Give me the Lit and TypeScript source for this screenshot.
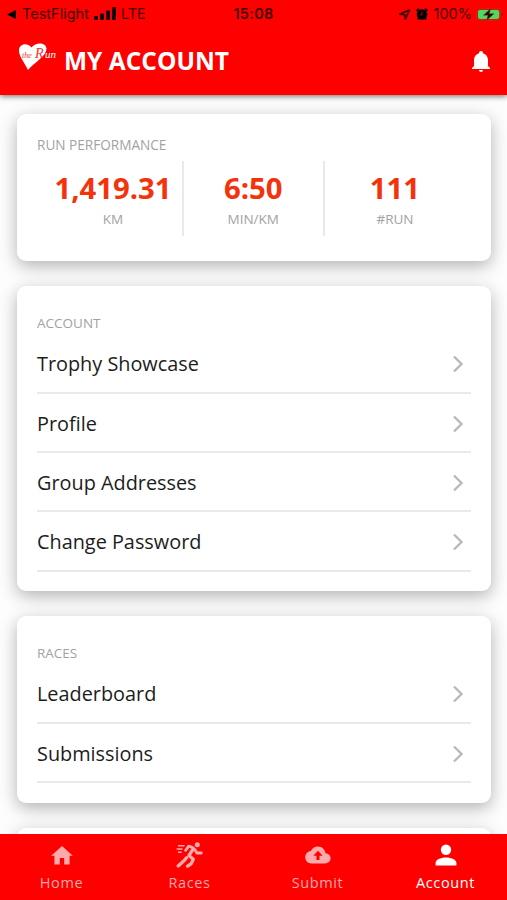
import { LitElement, html, svg, css } from "lit";
import { customElement, property } from "lit/decorators.js";

const icons: Record<string, unknown> = {
  home: svg`<path d="M10,20V14H14V20H19V12H22L12,3L2,12H5V20Z"/>`,
  races: svg`<circle cx="21.3" cy="2.700" r="2.500"/>
    <path d="M9.600 8.300 12.700 4.200 16.300 5.300 19.200 8 20.800 11H25.400" fill="none" stroke="currentColor" stroke-width="2.800" stroke-linecap="round" stroke-linejoin="round"/>
    <path d="M17.200 7 13 13.400 17.300 17.200 15.300 21.600 11.600 24.200M10.500 15.800 8.200 18.500 2.200 24" fill="none" stroke="currentColor" stroke-width="3.300" stroke-linecap="round" stroke-linejoin="round"/>
    <path d="M2 3.700H8.500M.7 7H6.500M2 10.300H5.600" fill="none" stroke="currentColor" stroke-width="1.600"/>`,
  submit: svg`<path fill-rule="evenodd" d="M20.500 8.200C19.900 4.200 17 1.400 13 1.400c-3.300 0-6 1.800-7.200 4.600C2.600 6.500.2 9.100.2 12.200c0 3.500 2.700 6.200 6.300 6.200h13.300c3.200 0 5.800-2.200 5.800-5.200 0-2.700-2.200-4.800-5.100-5ZM14.500 10.700v4.300h-3V10.700H8.300L13 5.800l4.700 4.900Z"/>`,
  account: svg`<path d="M12,4A4,4 0 0,1 16,8A4,4 0 0,1 12,12A4,4 0 0,1 8,8A4,4 0 0,1 12,4M12,14C16.420,14 20,15.790 20,18V20H4V18C4,15.790 7.580,14 12,14Z"/>`,
};

@customElement("menu-card")
export class MenuCard extends LitElement {
  @property() heading = "";
  @property({ attribute: false }) items: string[] = [];
  static styles = css`
    :host { display: block; background: #fff; border-radius: 9px; padding: 27px 20px 19.5px;
      box-shadow: 0 5px 17px rgba(0,0,0,.3); }
    .heading { font-size: 13.5px; line-height: 20px; color: #a2a2a2; }
    .row { display: flex; align-items: center; justify-content: space-between; box-sizing: border-box;
      height: 59.2px; padding-top: 2px; border-bottom: 2px solid #e9e9e9; font-size: 19.85px; color: #1c1c1c; }
    .heading + .row { height: 61px; }
    .chevron { width: 12px; height: 18px; margin-right: 6.5px; fill: none; stroke: #b9b9b9; stroke-width: 2.4; }
  `;
  render() {
    return html`<div class="heading">${this.heading}</div>
      ${this.items.map((t) => html`<div class="row"><span>${t}</span>
        <svg class="chevron" viewBox="0 0 12 18"><path d="M2 1.500 9.500 9 2 16.500"/></svg></div>`)}`;
  }
}

@customElement("app-root")
export class AppRoot extends LitElement {
  static styles = css`
    :host { display: flex; flex-direction: column; height: 900px; overflow: hidden; background: #fdfdfd;
      font-family: "Open Sans", "Noto Sans", sans-serif; }
    .top { flex: none; height: 95px; background: #f00; z-index: 1; box-shadow: 0 1px 6px rgba(0,0,0,.6); }
    .status { display: grid; grid-template-columns: 1fr auto 1fr; align-items: center; height: 28px;
      font: 14.5px/18px Inter, sans-serif; color: #400000; }
    .left, .right { display: flex; align-items: center; }
    .left { padding-left: 7px; }
    .right { justify-content: flex-end; padding-right: 3px; }
    .back { width: 9px; height: 9px; margin-right: 6px; }
    .signal { width: 22px; height: 13px; margin: -2px 5px 0; fill: #180000; }
    .clock { font-weight: 600; letter-spacing: .3px; }
    .arrow { width: 13px; height: 13px; margin-right: 5px; }
    .alarm { width: 12px; height: 12px; margin-right: 6px; }
    .battery { width: 28px; height: 13px; margin-left: 4px; }
    .bar { display: flex; align-items: center; height: 66px; padding: 0 17px 0 18px; }
    .logo { width: 38px; height: 28px; margin: -8px 8px 0 0; overflow: visible; }
    .script { font: italic 10px "Liberation Serif", serif; fill: #e33; }
    .script .out { fill: #fff; }
    .title { flex: 1; margin: 0; font-size: 24.5px; line-height: 34px; font-weight: 700; color: #fff; }
    .bell { width: 18px; height: 21px; fill: #fff; }
    .content { flex: 1; min-height: 0; overflow: hidden; display: flex; flex-direction: column; gap: 25px;
      padding: 19px 16.5px 0 17px; }
    .card { flex: none; box-sizing: border-box; height: 147px; background: #fff; border-radius: 9px;
      padding: 21px 20px; box-shadow: 0 5px 17px rgba(0,0,0,.3); }
    .heading { font-size: 13.6px; line-height: 20px; color: #a2a2a2; }
    .stats { display: grid; grid-template-columns: 147px 140.5px 1fr; height: 75px; margin-top: 6px; }
    .stat { display: flex; flex-direction: column; align-items: center; border-right: 2px solid #e9e9e9; }
    .stat:first-child { padding-left: 7px; }
    .stat:last-child { border: 0; padding-right: 5px; }
    .value { margin-top: 10px; font-size: 29.3px; line-height: 34px; font-weight: 700; color: #f4330c; }
    .unit { font-size: 13.5px; line-height: 20px; margin-top: 4px; color: #a2a2a2; }
    menu-card { flex: none; }
    .tabs { flex: none; display: grid; grid-template-columns: repeat(4, 128px); justify-content: center;
      height: 66px; background: #f00; z-index: 1; }
    .tab { display: flex; flex-direction: column; align-items: center; color: #ffaaaa; padding-top: 8px; }
    .active { color: #fff; }
    .icon { height: 26px; fill: currentColor; }
    .label { margin-top: 4px; font-size: 14.5px; line-height: 22px; letter-spacing: .6px; }
  `;

  stat(value: string, unit: string) {
    return html`<div class="stat"><div class="value">${value}</div><div class="unit">${unit}</div></div>`;
  }

  tab(icon: string, label: string, box: string, active = false) {
    return html`<div class="tab ${active ? "active" : ""}">
      <svg class="icon" viewBox=${box}>${icons[icon]}</svg><span class="label">${label}</span></div>`;
  }

  render() {
    return html`
      <header class="top">
        <div class="status">
          <div class="left">
            <svg class="back" viewBox="0 0 9 9"><path d="M0 4.500 9 0v9Z"/></svg>
            <span class="app">TestFlight</span>
            <svg class="signal" viewBox="0 0 22 13"><rect y="9" width="4" height="4" rx="1"/><rect x="6" y="6.500" width="4" height="6.500" rx="1"/><rect x="12" y="3.500" width="4" height="9.500" rx="1"/><rect x="18" width="4" height="13" rx="1"/></svg>
            <span class="net">LTE</span>
          </div>
          <span class="clock">15:08</span>
          <div class="right">
            <svg class="arrow" viewBox="0 0 13 13"><path d="M2 6 11.300 2 7.500 11 6.600 6.600Z" fill="none" stroke="#400000" stroke-width="1.800" stroke-linejoin="round"/></svg>
            <svg class="alarm" viewBox="0 0 12 12"><circle cx="6" cy="6.500" r="5.300"/><path d="M.6 3 3 .7M11.400 3 9 .7M2 11.500l1-1.500M10 11.500 9 10" stroke="#000" stroke-width="1.800"/><path d="M6 3.500v3.300H3.800" fill="none" stroke="#b00000"/></svg>
            <span class="pct">100%</span>
            <svg class="battery" viewBox="0 0 28 13"><rect x=".6" y=".8" width="24" height="11.400" rx="3" fill="none" stroke="#a33a10"/><rect x="2" y="2" width="21.200" height="9" rx="2" fill="#4cd964"/><path d="M25.800 4.500q1.800 2 0 4Z" fill="#900"/><path d="M14.500.8 7.500 7.200h4.600l-1.400 5 7.200-6.500h-4.700Z" fill="#300" stroke="#5a3a10" stroke-width=".5"/></svg>
          </div>
        </div>
        <div class="bar">
          <svg class="logo" viewBox="0 0 38 28"><path d="M10 27C7 20 1 14 1 7.500 1 1 9-1 13.500 4.500 18-1.500 28-.5 28.500 5.500 28.500 13 17 19 10 27Z" fill="#fff"/>
            <text class="script" y="15"><tspan x="4" font-size="8">the</tspan><tspan x="17" font-size="14">R</tspan><tspan class="out" x="27" font-size="11">un</tspan></text></svg>
          <h1 class="title">MY ACCOUNT</h1>
          <svg class="bell" viewBox="3 2 18 21" preserveAspectRatio="none"><path d="M21,19V20H3V19L5,17V11C5,7.900 7.030,5.170 10,4.290V4A2,2 0 0,1 14,4V4.290C16.970,5.170 19,7.900 19,11V17L21,19M14,21A2,2 0 0,1 10,21"/></svg>
        </div>
      </header>
      <main class="content">
        <section class="card">
          <div class="heading">RUN PERFORMANCE</div>
          <div class="stats">${this.stat("1,419.31", "KM")}${this.stat("6:50", "MIN/KM")}${this.stat("111", "#RUN")}</div>
        </section>
        <menu-card heading="ACCOUNT" .items=${["Trophy Showcase", "Profile", "Group Addresses", "Change Password"]}></menu-card>
        <menu-card heading="RACES" .items=${["Leaderboard", "Submissions"]}></menu-card>
        <menu-card></menu-card>
      </main>
      <nav class="tabs">
        ${this.tab("home", "Home", "0 -0.7 24 24")}
        ${this.tab("races", "Races", "0 0 27 26")}
        ${this.tab("submit", "Submit", "0 -3 26 26")}
        ${this.tab("account", "Account", "2 2 20 20", true)}
      </nav>`;
  }
}
